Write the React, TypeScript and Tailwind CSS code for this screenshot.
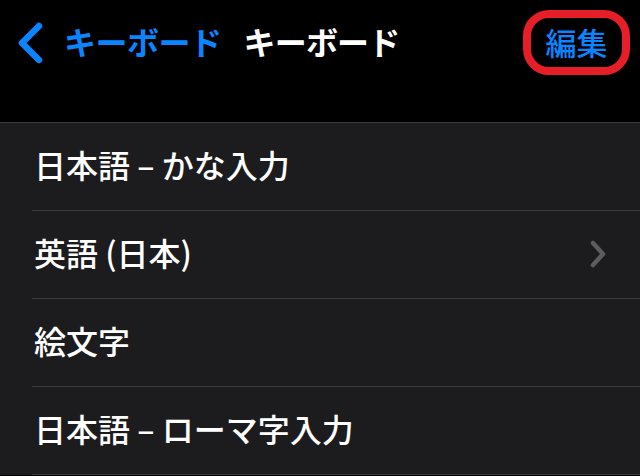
const rows = [
  { label: '日本語 – かな入力', chevron: false },
  { label: '英語 (日本)', chevron: true },
  { label: '絵文字', chevron: false },
  { label: '日本語 – ローマ字入力', chevron: false },
]

const font = { fontFamily: '"Noto Sans CJK JP", "Noto Sans", sans-serif' }

export default function App() {
  return (
    <div className="w-[640px] h-[476px] bg-black overflow-hidden" style={font}>
      {/* Nav bar */}
      <div className="h-[122px] flex items-start pt-[10px]">
        <div className="flex items-center h-[65px] pl-[16px]">
          <svg width="30" height="42" viewBox="0 0 30 42" className="mr-[18px]">
            <path d="M23 4 L6 21 L23 38" fill="none" stroke="#0a84ff" strokeWidth="6.5" strokeLinecap="round" strokeLinejoin="round" />
          </svg>
          <span className="text-[#0a84ff] text-[32px] font-bold leading-none tracking-[-0.5px] mb-[3px]">キーボード</span>
          <span className="text-white text-[32px] font-bold leading-none ml-[22px] tracking-[-0.8px] mb-[3px]">キーボード</span>
        </div>
        <div className="ml-auto mr-[10px] w-[107px] h-[65px] rounded-[26px] border-[8px] border-[#e61e28] flex items-center justify-center">
          <span className="text-[#0a84ff] text-[31px] font-medium leading-none mb-[2px]">編集</span>
        </div>
      </div>

      {/* List */}
      <div className="border-t border-[#3a3a3c] bg-[#1c1c1e]">
        {rows.map((row, i) => (
          <div key={i} className="pl-[32px]">
            <div className="h-[88px] flex items-center pr-[34px] border-b border-[#3a3a3c]">
              <span className="text-white text-[32px] font-medium leading-none pl-[2px] mb-[6px]">{row.label}</span>
              {row.chevron && (
                <svg width="16" height="28" viewBox="0 0 16 28" className="ml-auto mb-[2px]">
                  <path d="M3 3 L13 14 L3 25" fill="none" stroke="#5b5b60" strokeWidth="4.5" strokeLinecap="round" strokeLinejoin="round" />
                </svg>
              )}
            </div>
          </div>
        ))}
      </div>
    </div>
  )
}
